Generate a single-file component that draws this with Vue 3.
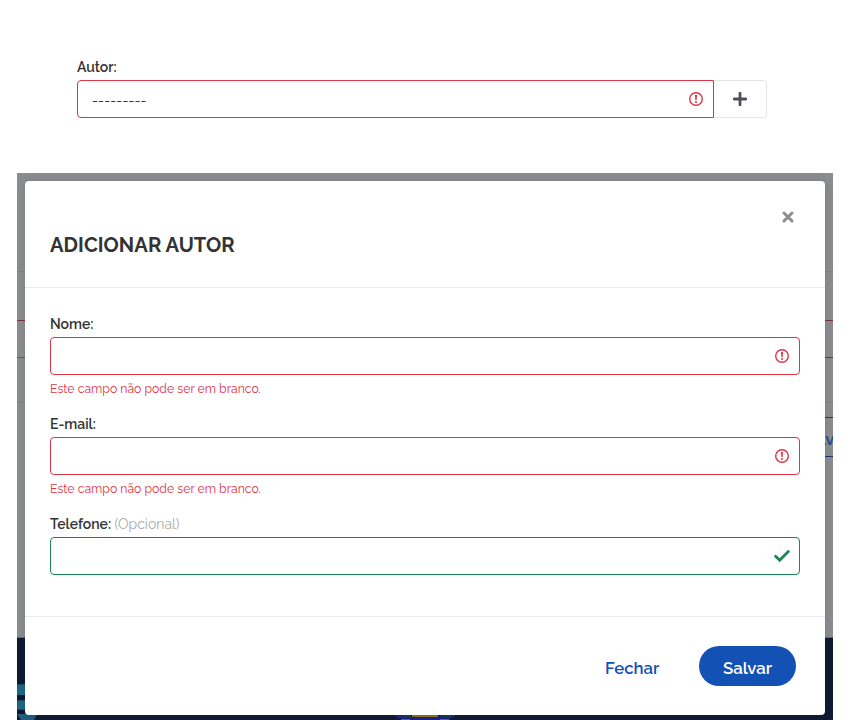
<script setup>
import { ref } from 'vue'

const fields = ref([
  { id: 'nome', label: 'Nome:', error: 'Este campo não pode ser em branco.', valid: false },
  { id: 'email', label: 'E-mail:', error: 'Este campo não pode ser em branco.', valid: false },
  { id: 'telefone', label: 'Telefone:', optional: '(Opcional)', valid: true },
])
</script>

<template>
  <main class="page">
    <section class="author">
      <label class="label">Autor:</label>
      <div class="group">
        <div class="select">
          <span class="dashes">---------</span>
          <svg class="alert" viewBox="0 0 16 16"><circle cx="8" cy="8" r="6.3" /><path class="bar" d="M7 4.1h2l-.3 5H7.3z" /><circle class="dot" cx="8" cy="11" r="1" /></svg>
        </div>
        <button class="add" aria-label="Adicionar">
          <svg viewBox="0 0 14 14"><path d="M7 1.2v11.6M1.2 7h11.6" /></svg>
        </button>
      </div>
    </section>

    <section class="stage">
      <div class="behind">
        <div class="row r1"></div>
        <div class="row r2"></div>
        <div class="row r3"></div>
        <div class="row r4"></div>
        <div class="row r5"></div>
        <div class="row r6"><span>Salvar</span></div>
        <div class="row r7"></div>
        <div class="foot">
          <svg class="art" viewBox="0 0 816 82">
            <path fill="#1f6685" d="M0 46h12v11H0zM0 62h12v10H0z" />
            <path fill="#174b68" d="M0 46h12v1H0zM0 62h12v1H0zM0 71h12v1H0z" />
            <path fill="#225c7e" d="M0 76h19v2l-2 4H4z" />
            <path fill="#21208b" d="M377 77h63l-5 3-7 2h-40l-7-2z" />
            <path fill="#0e443f" d="M382 77h12v2h-8zM424 77h13l-4 2h-8z" />
            <path fill="#101b3e" d="M394 77h2l2 3-4-1zM421 77h3l-4 3z" />
            <path fill="#827622" d="M395 77h26v2h-26z" />
            <path fill="#66579e" d="M384 81h9v1h-9zM423 81h9v1h-9z" />
          </svg>
        </div>
      </div>

      <div class="modal" role="dialog">
        <header class="head">
          <button class="close" aria-label="Fechar janela">
            <svg viewBox="0 0 12 12"><path d="M2 2l8 8M10 2l-8 8" /></svg>
          </button>
          <h2>ADICIONAR AUTOR</h2>
        </header>
        <div class="body">
          <div v-for="f in fields" :key="f.id" class="field">
            <div class="caption"><label class="label" :for="f.id">{{ f.label }}</label><span v-if="f.optional" class="optional">{{ f.optional }}</span></div>
            <div class="control" :class="{ valid: f.valid }">
              <input :id="f.id" type="text" />
              <svg v-if="f.valid" class="check" viewBox="0 0 16 14"><path d="M1.6 7.3l4.1 4L14.3 2.6" /></svg>
              <svg v-else class="alert" viewBox="0 0 16 16"><circle cx="8" cy="8" r="6.3" /><path class="bar" d="M7 4.1h2l-.3 5H7.3z" /><circle class="dot" cx="8" cy="11" r="1" /></svg>
            </div>
            <p v-if="f.error" class="error">{{ f.error }}</p>
          </div>
        </div>
        <footer class="actions">
          <button class="cancel">Fechar</button>
          <button class="save">Salvar</button>
        </footer>
      </div>
    </section>
  </main>
</template>

<style>
body { background: #fff; overflow: hidden; }
</style>

<style scoped>
* { box-sizing: border-box; }
.page { width: 850px; height: 720px; overflow: hidden; font-family: Raleway, Lato, "Open Sans", sans-serif; color: #333; background: #fff; }
button { font-family: inherit; border: 0; padding: 0; background: none; }
svg { display: block; }
.author { height: 173px; padding: 57px 83px 0 77px; }
.label { display: block; font-size: 14px; line-height: 20px; font-weight: 600; white-space: nowrap; }
.group { display: flex; margin-top: 3px; }
.select { display: flex; align-items: center; justify-content: space-between; width: 637px; height: 38px; border: 1px solid #dc3545; border-radius: 4px 0 0 4px; padding: 0 9px 0 14px; }
.dashes { font-size: 14px; font-weight: 400; letter-spacing: .17px; line-height: 20px; padding-top: 3px; color: #333; }
.add { display: flex; align-items: center; justify-content: center; width: 53px; height: 38px; border: 1px solid #e6e6e6; border-left: 0; border-radius: 0 4px 4px 0; }
.add svg { width: 14px; height: 14px; }
.add path { fill: none; stroke: #4f5054; stroke-width: 2.8; stroke-linecap: round; }
.alert { width: 16px; height: 16px; fill: none; stroke: #dc3545; stroke-width: 1.4; }
.alert .bar, .alert .dot { fill: #dc3545; stroke: none; }
.stage { display: grid; width: 816px; height: 547px; margin-left: 17px; overflow: hidden; }
.behind, .modal { grid-area: 1 / 1; }
.behind { display: flex; flex-direction: column; height: 547px; background: #8b8c90; }
.row { flex: none; border-bottom: 1px solid #808185; }
.r1 { height: 99px; }
.r2 { height: 49px; border-color: #7f2e3d; }
.r3 { height: 37px; border-image: linear-gradient(90deg, #5d5e63 50%, #7f2e3d 50%) 1; }
.r4 { height: 45px; }
.r5 { height: 15px; margin-left: 500px; border-color: #153e7b; }
.r6 { display: flex; justify-content: flex-end; align-items: center; height: 39px; margin-left: 500px; border-color: #153e7b; overflow: hidden; }
.r6 span { flex: none; margin-right: -17px; padding-top: 3px; font-size: 16.8px; font-weight: 600; color: #174a94; }
.r7 { height: 181px; border-color: #63656c; }
.foot { height: 82px; background: #101b33; }
.art { width: 816px; height: 82px; }
.modal { width: 800px; height: 534px; margin: 8px; background: #fff; border-radius: 4px; box-shadow: 0 0 8px rgba(0, 0, 0, .1); }
.head { height: 107px; padding: 30px 25px 0; border-bottom: 1px solid #ebebeb; }
.close { display: block; width: 12px; height: 12px; margin: 0 6px 0 auto; }
.close svg { width: 12px; height: 12px; }
.close path { fill: none; stroke: #8b8d90; stroke-width: 3; stroke-linecap: round; }
h2 { margin: 8px 0 0; font-size: 20.16px; line-height: 28px; font-weight: 700; letter-spacing: .05px; white-space: nowrap; }
.body { height: 328px; padding: 26px 25px 0; }
.field { height: 100px; }
.caption { display: flex; gap: 3.5px; height: 20px; }
.optional { font-size: 14px; line-height: 20px; font-weight: 400; color: #aaa; }
.control { display: flex; align-items: center; height: 38px; margin-top: 3px; border: 1px solid #dc3545; border-radius: 4px; padding-right: 9px; }
.control input { flex: 1; min-width: 0; height: 36px; border: 0; outline: 0; background: transparent; padding: 0 14px; }
.valid { border-color: #198754; }
.check { width: 16px; height: 14px; }
.check path { fill: none; stroke: #198754; stroke-width: 2.8; stroke-linecap: round; }
.error { margin: 5px 0 0; font-size: 12.25px; line-height: 18px; color: #dc3545; white-space: nowrap; }
.actions { display: flex; justify-content: flex-end; height: 99px; padding: 29px 29px 0; border-top: 1px solid #ebebeb; }
.cancel, .save { height: 40px; font-size: 16.8px; font-weight: 600; line-height: 20px; padding-top: 4px; white-space: nowrap; }
.cancel { width: 54px; margin-right: 40px; color: #1351b4; }
.save { width: 97px; border-radius: 20px; background: #1351b4; color: #fff; }
</style>
